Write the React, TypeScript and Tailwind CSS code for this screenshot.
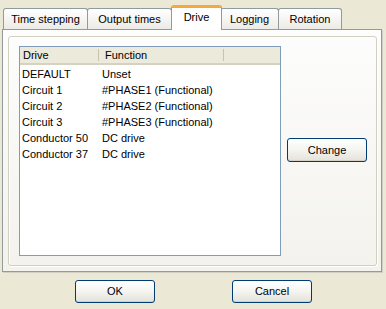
import React from 'react';

const rows = [
  { drive: 'DEFAULT', fn: 'Unset' },
  { drive: 'Circuit 1', fn: '#PHASE1 (Functional)' },
  { drive: 'Circuit 2', fn: '#PHASE2 (Functional)' },
  { drive: 'Circuit 3', fn: '#PHASE3 (Functional)' },
  { drive: 'Conductor 50', fn: 'DC drive' },
  { drive: 'Conductor 37', fn: 'DC drive' },
];

const tabs = [
  { label: 'Time stepping', w: 'w-[85px]' },
  { label: 'Output times', w: 'w-[85px]' },
  { label: 'Drive', w: 'w-[51px]', active: true },
  { label: 'Logging', w: 'w-[59px]' },
  { label: 'Rotation', w: 'w-[64px]' },
];

// bouton façon XP
function XpButton({ label, className }: { label: string; className?: string }) {
  return (
    <button
      className={
        'h-[23px] w-[80px] rounded-[3px] border border-[#003c74] bg-gradient-to-b from-white via-[#f4f4f0] to-[#e3e2da] text-[11px] text-black shadow-[inset_0_-1px_0_#d6d0c5] ' +
        (className || '')
      }
    >
      {label}
    </button>
  );
}

export default function App() {
  return (
    <div className="w-[386px] h-[309px] overflow-hidden bg-[#ebe9d6] font-['Liberation_Sans',Arial,sans-serif] text-[11px] text-black">
      {/* ── onglets ── */}
      <div className="flex items-end h-[29px] pl-[3px] pt-[4px]">
        {tabs.map((t) =>
          t.active ? (
            <div
              key={t.label}
              className={`${t.w} -mx-[1px] relative z-10 h-[25px] -mb-[1px] bg-white border-x border-[#919b9c] border-t-[3px] border-t-[#f3a93c] rounded-t-[3px] flex items-center justify-center pb-[3px]`}
            >
              {t.label}
            </div>
          ) : (
            <div
              key={t.label}
              className={`${t.w} h-[21px] bg-gradient-to-b from-white to-[#ecebe5] border border-b-0 border-[#919b9c] rounded-t-[3px] flex items-center justify-center -ml-[1px] first:ml-0`}
            >
              {t.label}
            </div>
          )
        )}
      </div>

      {/* ── panneau ── */}
      <div className="ml-[2px] w-[380px] h-[243px] border border-[#919b9c] bg-gradient-to-b from-[#fdfdfd] to-[#f3f2ed] shadow-[1px_1px_0_#d0cfc2] pt-[6px] pl-[5px]">
        <div className="w-[369px] h-[230px] rounded-[3px] border border-[#d0d0bf] shadow-[inset_1px_1px_0_#ffffff,1px_1px_0_#ffffff] flex items-start gap-[6px] pt-[9px] pl-[10px]">
          <div className="w-[262px] h-[210px] border border-[#7f9db9] bg-white">
            <div className="flex h-[18px] bg-[#ebeadb] border-b-[2px] border-[#d6d2c2]">
              <div className="w-[79px] pl-[3px] flex items-center border-r border-[#c7c5b2] my-[2px]">Drive</div>
              <div className="w-[125px] pl-[6px] flex items-center border-r border-[#c7c5b2] my-[2px]">Function</div>
              <div className="flex-1" />
            </div>
            <div className="pt-[1px]">
              {rows.map((r) => (
                <div key={r.drive} className="flex h-[16px] items-center">
                  <div className="w-[80px] pl-[2px]">{r.drive}</div>
                  <div className="pl-[2px]">{r.fn}</div>
                </div>
              ))}
            </div>
          </div>
          <XpButton label="Change" className="mt-[92px] h-[24px]" />
        </div>
      </div>

      {/* ── boutons du bas ── */}
      <div className="flex pt-[8px]">
        <XpButton label="OK" className="ml-[75px]" />
        <XpButton label="Cancel" className="ml-[77px]" />
      </div>
    </div>
  );
}
